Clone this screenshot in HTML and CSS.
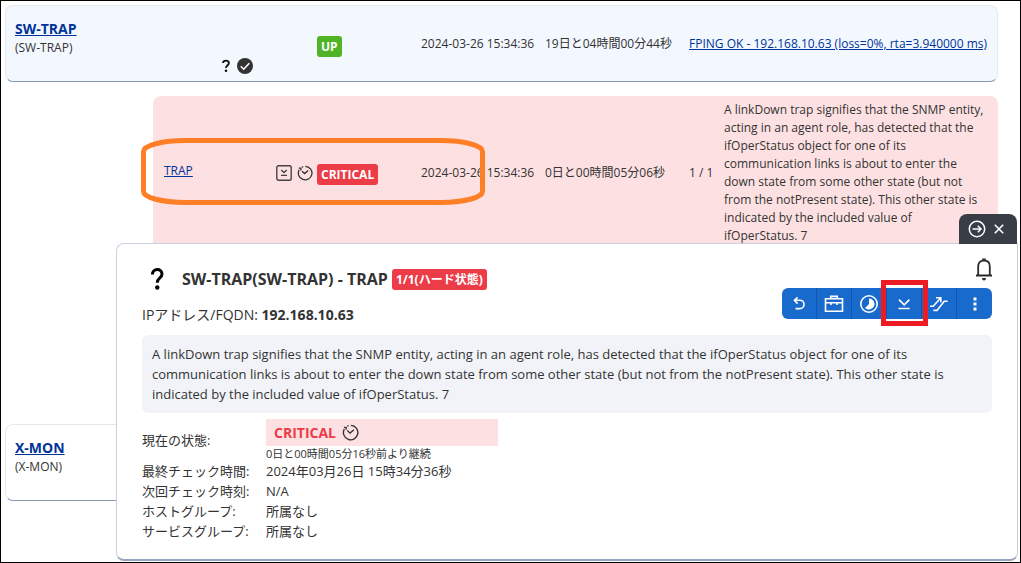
FILE: index.html
```html
<!DOCTYPE html>
<html lang="ja">
<head>
<meta charset="utf-8">
<title>X-MON</title>
<link rel="stylesheet" href="styles.css">
</head>
<body>
<svg class="defs" aria-hidden="true">
  <symbol id="retry" viewBox="0 0 16 16"><path d="M8.4 1.3A6.8 6.8 0 1 1 2.2 4.8M1.8 3.2H3.9V5.4M5 2.1L6.2 1.6M5 6.2L7.6 8.6L11.2 5.4" fill="none" stroke="currentColor" stroke-width="1.3"/></symbol>
</svg>
<main class="page">
  <section class="card host host-up">
    <div class="name"><a class="host-link" href="#sw-trap">SW-TRAP</a><span>(SW-TRAP)</span></div>
    <div class="host-icons">
      <svg width="10" height="14" viewBox="0 0 10 14"><path d="M2 4C2.2 .9 7.9 .8 7.9 4 7.9 6.2 5 6.3 5 9" fill="none" stroke="#111" stroke-width="1.9"/><circle cx="5" cy="11.8" r="1.3" fill="#111"/></svg>
      <svg width="16" height="16" viewBox="0 0 16 16"><circle cx="8" cy="8" r="8" fill="#333"/><path d="M3.8 8.3L6.7 11.2L12.3 5.2" fill="none" stroke="#fff" stroke-width="1.6"/></svg>
    </div>
    <div class="host-state"><span class="badge up">UP</span></div>
    <div>2024-03-26 15:34:36</div>
    <div>19日と04時間00分44秒</div>
    <div><a href="#ping">FPING OK - 192.168.10.63 (loss=0%, rta=3.940000 ms)</a></div>
  </section>

  <div class="services">
    <section class="card service">
      <div class="service-name"><a href="#trap">TRAP</a></div>
      <div class="service-icons">
        <svg width="16" height="16" viewBox="0 0 16 16" fill="none" stroke="#444" stroke-width="1.4"><rect x=".8" y=".8" width="14.4" height="14.4" rx="1.8"/><path d="M5.3 5L8 7.6L10.7 5M5 10.4H11"/></svg>
        <svg class="retry" width="16" height="16"><use href="#retry"/></svg>
      </div>
      <div class="service-state"><span class="badge critical">CRITICAL</span></div>
      <div>2024-03-26 15:34:36</div>
      <div>0日と00時間05分06秒</div>
      <div>1 / 1</div>
      <p>A linkDown trap signifies that the SNMP entity, acting in an agent role, has detected that the ifOperStatus object for one of its communication links is about to enter the down state from some other state (but not from the notPresent state). This other state is indicated by the included value of ifOperStatus. 7</p>
      <svg class="marker" width="344" height="67" viewBox="0 0 344 67"><rect x="2.5" y="2.5" width="339" height="62" rx="42" ry="11" fill="none" stroke="#ff7f27" stroke-width="5"/></svg>
    </section>
  </div>

  <section class="card host">
    <div class="name"><a class="host-link" href="#x-mon">X-MON</a><span>(X-MON)</span></div>
  </section>

  <section class="dialog">
    <div class="dialog-tab">
      <button type="button" aria-label="開く"><svg width="18" height="18" viewBox="0 0 18 18" fill="none" stroke="#fff" stroke-width="1.5"><circle cx="9" cy="9" r="7.7"/><path d="M4.5 9H13M9.8 5.8L13 9L9.8 12.2"/></svg></button>
      <button type="button" aria-label="閉じる"><svg width="10" height="10" viewBox="0 0 10 10"><path d="M.8 .8L9.2 9.2M9.2 .8L.8 9.2" stroke="#fff" stroke-width="1.6"/></svg></button>
    </div>
    <header class="dialog-head">
      <div class="summary">
        <div class="title-row">
          <svg width="30" height="24" viewBox="0 0 30 24"><path d="M10.4 7.5C10.4 1 20 .9 20 7 20 11.2 15.3 10.8 15.3 15.8" fill="none" stroke="#000" stroke-width="3"/><circle cx="15.3" cy="20.5" r="2.2"/></svg>
          <h1>SW-TRAP(SW-TRAP) - TRAP</h1>
          <span class="badge critical">1/1(ハード状態)</span>
        </div>
        <div class="address">IPアドレス/FQDN: <b>192.168.10.63</b></div>
      </div>
      <div class="actions">
        <button type="button" class="bell" aria-label="通知"><svg width="16" height="23" viewBox="0 0 16 23"><path d="M2.2 17V8.5C2.2 5 4.3 2.5 8 2.5S13.8 5 13.8 8.5V17" fill="none" stroke="#2b2b2b" stroke-width="1.8"/><path d="M0 16.5H16V18.5H0ZM6.3 0.4H9.7V3H6.3ZM6 20H10Q10 22.5 8 22.5T6 20Z" fill="#2b2b2b"/></svg></button>
        <div class="toolbar">
          <button type="button" aria-label="戻す"><svg width="20" height="20" viewBox="0 0 20 20"><path d="M5 6.2H10.8A4.2 4.2 0 0 1 10.8 14.6H6.6M8.6 3.4L5.4 6.2L8.6 9.6"/></svg></button>
          <button type="button" aria-label="メンテナンス"><svg width="20" height="20" viewBox="0 0 20 20"><path d="M1.5 4.8H18.5V17.2H1.5ZM6.7 4.8V2.4H13.3V4.8M2 8.8H18M7 8.4V11M13 8.4V11"/></svg></button>
          <button type="button" aria-label="期間"><svg width="20" height="20" viewBox="0 0 20 20"><circle cx="10" cy="10" r="8.2"/><path class="solid" d="M10 4.5A5.5 5.5 0 1 1 6.1 13.9L10 10Z"/></svg></button>
          <button type="button" class="marked" aria-label="確認"><svg width="20" height="20" viewBox="0 0 20 20"><path d="M5 5.6L10.2 10.8L15.4 5.6M4.5 14.5H15.6"/></svg></button>
          <button type="button" aria-label="エスカレーション"><svg width="20" height="20" viewBox="0 0 20 20"><path d="M1 12.2H4.2L11.4 4.2M7 3.8H11.8V8.2M4.4 16.4H8L15.2 7.2H18.6"/></svg></button>
          <button type="button" aria-label="その他"><svg width="20" height="20" viewBox="0 0 20 20"><path class="solid" d="M8.5 3.5h3v3h-3zM8.5 8.5h3v3h-3zM8.5 13.5h3v3h-3z"/></svg></button>
        </div>
      </div>
    </header>
    <p class="output">A linkDown trap signifies that the SNMP entity, acting in an agent role, has detected that the ifOperStatus object for one of its communication links is about to enter the down state from some other state (but not from the notPresent state). This other state is indicated by the included value of ifOperStatus. 7</p>
    <dl class="details">
      <dt>現在の状態:</dt>
      <dd><div class="state">CRITICAL <svg class="retry" width="17" height="17" viewBox="0 0 16 16"><use href="#retry"/></svg></div><small>0日と00時間05分16秒前より継続</small></dd>
      <dt>最終チェック時間:</dt><dd>2024年03月26日 15時34分36秒</dd>
      <dt>次回チェック時刻:</dt><dd>N/A</dd>
      <dt>ホストグループ:</dt><dd>所属なし</dd>
      <dt>サービスグループ:</dt><dd>所属なし</dd>
    </dl>
  </section>
</main>
</body>
</html>
```
FILE: styles.css
```css
* { box-sizing: border-box; }
body {
  margin: 0;
  font: 12px/18px "Open Sans", "Noto Sans CJK JP", sans-serif;
  color: #333;
  background: #fff;
}
button { border: 0; padding: 0; background: none; display: flex; align-items: center; justify-content: center; }
svg { display: block; }
a { color: #003399; }
.defs { display: none; }
.retry { color: #333; }

.page {
  position: relative;
  min-height: 100vh;
  border: 1px solid #000;
  padding: 4px 22px 4px 4px;
}

.card {
  display: grid;
  align-items: center;
  border-radius: 8px;
}
.host {
  grid-template-columns: 206px 96px 104px 124px 144px 1fr;
  height: 77px;
  padding: 0 0 0 9px;
  border: 1px solid #e4e9f0;
  border-bottom: 1px solid #8698b0;
}
.host-up { background: #f3f8ff; }
.name { display: flex; flex-direction: column; align-self: start; padding-top: 14px; }
.name span { line-height: 20px; }
.host-link { font-size: 14px; font-weight: 700; align-self: flex-start; }
.host-icons { display: flex; align-items: center; gap: 6px; align-self: end; padding-bottom: 7px; }
.host-state { padding-top: 5px; }

.badge {
  display: inline-block;
  padding: 0 4px;
  border-radius: 3px;
  color: #fff;
  font-weight: 700;
  line-height: 21px;
}
.up { background: #50b426; }
.critical { background: #eb3c48; }

.services { min-height: 328px; padding: 14px 0 0 148px; margin-bottom: 14px; }
.service {
  position: relative;
  grid-template-columns: 112px 41px 104px 124px 144px 35px 1fr;
  padding: 5px 10px 5px 11px;
  background: #fde1e2;
}
.service p { margin: 0; }
.service-name { padding-bottom: 4px; }
.service-state { padding-top: 2px; }
.service-icons { display: flex; gap: 5px; }
.marker { position: absolute; left: -12px; top: 42px; pointer-events: none; }

.dialog {
  position: absolute;
  left: 115px;
  right: 2px;
  top: 242px;
  padding: 14px 25px 18px;
  background: #fff;
  border: 1px solid #ccd1df;
  border-bottom: 2px solid #9aa4be;
  border-radius: 8px 0 8px 8px;
}
.dialog-tab {
  position: absolute;
  right: 0;
  bottom: 100%;
  display: flex;
  align-items: center;
  gap: 8px;
  height: 30px;
  padding: 0 13px 0 9px;
  background: #393e46;
  border-radius: 8px 8px 0 0;
}
.dialog-head { display: flex; justify-content: space-between; }
.title-row { display: flex; align-items: center; gap: 4px; height: 42px; }
.title-row svg { margin-right: 6px; }
.title-row h1 { margin: 0; font-size: 16px; }
.address { font-size: 14px; line-height: 30px; }
.actions { display: flex; flex-direction: column; align-items: flex-end; gap: 7px; }
.toolbar { display: flex; background: #196acd; border-radius: 6px; }
.toolbar button { width: 35px; height: 31px; }
.toolbar button:not(:last-child) { border-right: 1px solid #1257ab; }
.toolbar svg { fill: none; stroke: #fff; stroke-width: 1.6; }
.toolbar .solid { fill: #fff; stroke: none; }
.marked { position: relative; z-index: 1; }
.marked::after { content: ""; position: absolute; inset: -8px -7px -7px -6px; border: 5px solid #ed1c24; }

.output {
  margin: 5px 0 6px;
  padding: 9px 10px;
  border-radius: 6px;
  background: #f2f3f8;
  font-size: 13px;
  line-height: 20px;
}
.details {
  display: grid;
  grid-template-columns: 124px 1fr;
  align-items: center;
  margin: 0;
  font-size: 13px;
  line-height: 20px;
}
.details dd { margin: 0; }
.state {
  display: flex;
  align-items: center;
  gap: 6px;
  width: 232px;
  height: 27px;
  padding-left: 8px;
  background: #fde1e2;
  color: #eb3c48;
  font-size: 14px;
  font-weight: 700;
}
.details small { display: block; font-size: 11px; line-height: 15px; }
```
